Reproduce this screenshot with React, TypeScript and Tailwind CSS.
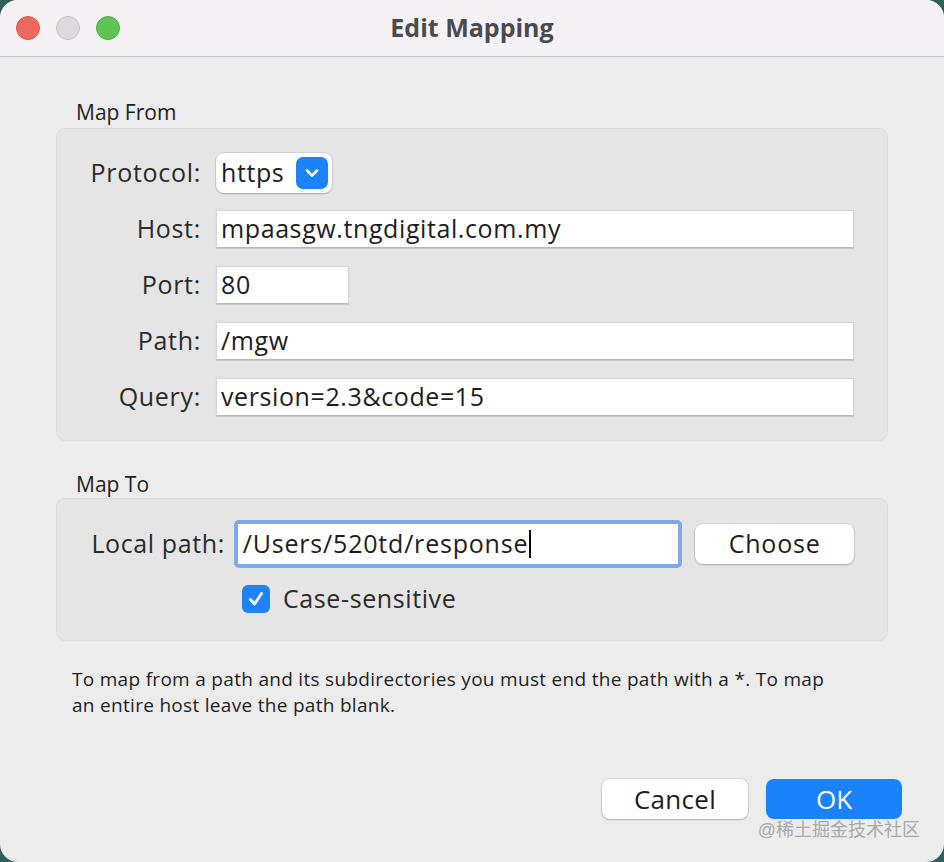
import React from "react";

const font = { fontFamily: '"Open Sans", "Liberation Sans", Arial, sans-serif' };

function Field({ value, className = "" }: { value: string; className?: string }) {
  return (
    <div
      className={"h-[38px] bg-white border border-[#d4d4d4] border-b-[#b8b8b8] shadow-[0_1px_1px_rgba(0,0,0,0.12)] flex items-center px-[4px] text-[25px] tracking-[0.6px] text-[#1d1d1d] " + className}
    >
      {value}
    </div>
  );
}

function Label({ children }: { children: React.ReactNode }) {
  return <div className="text-right text-[25px] tracking-[0.7px] text-[#2b2b2b]">{children}</div>;
}

export default function App() {
  return (
    <div className="w-[944px] h-[862px] bg-[#2f5f5c] overflow-hidden" style={font}>
      <div className="w-full h-full rounded-[18px] overflow-hidden bg-[#ececec] flex flex-col">
        {/* Title bar */}
        <div className="h-[57px] shrink-0 bg-[#f5f1f5] border-b border-[#c9c6c9] flex items-center relative">
          <div className="flex gap-[16px] pl-[16px]">
            <span className="w-[24px] h-[24px] rounded-full bg-[#ee6a5e] border border-[#d9564b]" />
            <span className="w-[24px] h-[24px] rounded-full bg-[#dcdadc] border border-[#c4c2c4]" />
            <span className="w-[24px] h-[24px] rounded-full bg-[#5fc454] border border-[#4aae40]" />
          </div>
          <div className="absolute inset-0 flex items-center justify-center text-[25px] font-bold text-[#4b4a4c]">
            Edit Mapping
          </div>
        </div>

        <div className="px-[56px] pt-[41px]">
          {/* Map From */}
          <div className="pl-[20px] text-[21px] text-[#1f1f1f] leading-[28px]">Map From</div>
          <div className="mt-[2px] w-[832px] rounded-[9px] bg-[#e5e5e5] border border-[#dadada] pl-[31px] pr-[33px] pt-[24px] pb-[24px]">
            <div className="grid grid-cols-[113px_1fr] gap-x-[15px] items-center">
              <Label>Protocol:</Label>
              <div className="h-[40px] w-[116px] rounded-[8px] bg-white shadow-[0_0_0_1px_rgba(0,0,0,0.08),0_1px_2px_rgba(0,0,0,0.2)] flex items-center justify-between pl-[5px] pr-[4px] text-[25px] tracking-[0.6px] text-[#1d1d1d]">
                https
                <span className="w-[32px] h-[32px] rounded-[7px] bg-[#1c84f8] flex items-center justify-center">
                  <svg width="14" height="10" viewBox="0 0 14 10" fill="none">
                    <path d="M2 2.5 L7 7.5 L12 2.5" stroke="white" strokeWidth="2.6" strokeLinecap="round" strokeLinejoin="round" />
                  </svg>
                </span>
              </div>

              <div className="col-span-2 h-[17px]" />
              <Label>Host:</Label>
              <Field value="mpaasgw.tngdigital.com.my" />

              <div className="col-span-2 h-[18px]" />
              <Label>Port:</Label>
              <Field value="80" className="w-[133px]" />

              <div className="col-span-2 h-[18px]" />
              <Label>Path:</Label>
              <Field value="/mgw" />

              <div className="col-span-2 h-[18px]" />
              <Label>Query:</Label>
              <Field value="version=2.3&code=15" />
            </div>
          </div>

          {/* Map To */}
          <div className="mt-[29px] pl-[20px] text-[21px] text-[#1f1f1f] leading-[28px]">Map To</div>
          <div className="mt-[0px] w-[832px] h-[143px] rounded-[9px] bg-[#e5e5e5] border border-[#dadada] pl-[31px] pr-[33px] pt-[21px]">
            <div className="flex items-center">
              <div className="w-[137px] text-[25px] tracking-[0.6px] text-[#2b2b2b] text-right whitespace-nowrap">Local path:</div>
              <div className="ml-[9px] w-[449px] h-[48px] rounded-[5px] bg-[#7fa9ea] p-[4px]">
                <div className="h-full bg-white flex items-center px-[5px] text-[25px] tracking-[0.8px] text-[#1d1d1d]">
                  /Users/520td/response
                  <span className="w-[1.5px] h-[28px] bg-black ml-[1px]" />
                </div>
              </div>
              <div className="ml-[13px] w-[159px] h-[40px] rounded-[8px] bg-white shadow-[0_0_0_1px_rgba(0,0,0,0.08),0_1px_2px_rgba(0,0,0,0.2)] flex items-center justify-center text-[25px] tracking-[0.8px] text-[#1d1d1d]">
                Choose
              </div>
            </div>
            <div className="mt-[12px] ml-[154px] flex items-center gap-[13px]">
              <span className="w-[28px] h-[28px] rounded-[6px] bg-[#1c84f8] flex items-center justify-center">
                <svg width="18" height="18" viewBox="0 0 18 18" fill="none">
                  <path d="M3.5 9.5 L7.5 14 L14.5 3.5" stroke="white" strokeWidth="2.8" strokeLinecap="round" strokeLinejoin="round" />
                </svg>
              </span>
              <span className="text-[25px] tracking-[0.6px] text-[#2b2b2b]">Case-sensitive</span>
            </div>
          </div>

          {/* Help text */}
          <p className="mt-[25px] pl-[16px] pr-[56px] text-[19px] tracking-[0.3px] leading-[26px] text-[#1f1f1f]">
            To map from a path and its subdirectories you must end the path with a *. To map an entire host leave the path blank.
          </p>

          {/* Buttons */}
          <div className="mt-[61px] flex justify-end gap-[18px] mr-[-14px]">
            <div className="w-[146px] h-[40px] rounded-[8px] bg-white shadow-[0_0_0_1px_rgba(0,0,0,0.08),0_1px_2px_rgba(0,0,0,0.2)] flex items-center justify-center text-[26px] tracking-[0.3px] text-[#1d1d1d]">
              Cancel
            </div>
            <div className="w-[136px] h-[40px] rounded-[8px] bg-[#1a82fb] flex items-center justify-center text-[26px] text-white">
              OK
            </div>
          </div>
          <div
            className="mt-[-2px] flex justify-end mr-[-32px] text-[18px] text-[#a9a9a9]"
            style={{ fontFamily: '"Liberation Sans", "Noto Sans CJK SC", sans-serif' }}
          >
            @稀土掘金技术社区
          </div>
        </div>
      </div>
    </div>
  );
}
